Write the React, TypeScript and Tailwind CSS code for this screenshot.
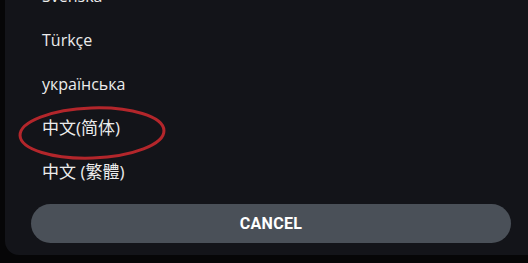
const languages = [
  { label: 'Svenska', size: 'text-[16px]' },
  { label: 'Türkçe', size: 'text-[16px]' },
  { label: 'українська', size: 'text-[16px]' },
  { label: '中文(简体)', size: 'text-[17px]' },
  { label: '中文 (繁體)', size: 'text-[17px]' },
]

export default function App() {
  return (
    <div className="h-[263px] w-full overflow-hidden bg-[#060607]">
      <div
        className="relative ml-[5px] flex h-[255px] flex-col overflow-hidden rounded-bl-[14px] bg-[#131419]"
        style={{ fontFamily: '"Open Sans", "Noto Sans CJK SC", sans-serif' }}
      >
        <ul className="-mt-[26px] pl-[37px]">
          {languages.map((lang) => (
            <li key={lang.label} className={`flex h-[44px] items-center text-[#ececec] ${lang.size}`}>
              {lang.label}
            </li>
          ))}
        </ul>

        {/* red marker around the selected language */}
        <svg
          className="pointer-events-none absolute left-[12px] top-[104px]"
          width="152"
          height="60"
          viewBox="0 0 152 60"
        >
          <ellipse
            cx="75"
            cy="29"
            rx="72"
            ry="25"
            fill="none"
            stroke="#b3262b"
            strokeWidth="3"
            transform="rotate(-2 75 29)"
          />
        </svg>

        <div className="mt-[10px] pl-[26px] pr-[17px]">
          <button
            className="flex h-[39px] w-full items-center justify-center rounded-full bg-[#4a5058] text-[16px] font-bold tracking-[0.3px] text-white"
            style={{ fontFamily: 'Roboto, sans-serif' }}
          >
            CANCEL
          </button>
        </div>
      </div>
    </div>
  )
}
